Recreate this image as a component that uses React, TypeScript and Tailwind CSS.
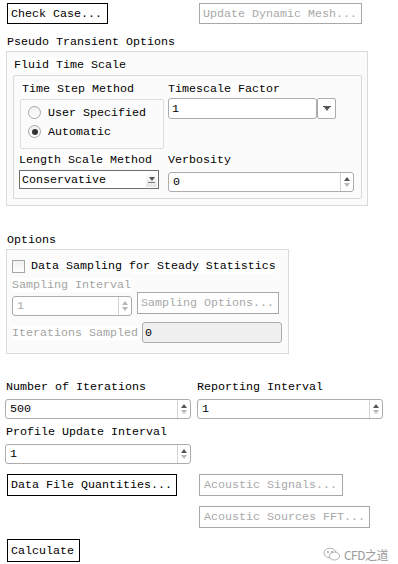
import React from 'react';

const Label: React.FC<{ text: string; gray?: boolean; className?: string }> = ({ text, gray, className = '' }) => (
  <div className={`h-[14px] leading-[14px] whitespace-pre ${gray ? 'text-[#a3a3a3]' : 'text-black'} ${className}`}>
    <span className="bg-white">{text}</span>
  </div>
);

const Button: React.FC<{ text: string; w: string; disabled?: boolean; className?: string }> = ({ text, w, disabled, className = '' }) => (
  <div
    className={`${w} h-[22px] flex items-center pl-[3px] whitespace-pre border bg-white ${
      disabled ? 'border-[#a8a8a8] text-[#a8a8a8]' : 'border-black text-black'
    } ${className}`}
  >
    {text}
  </div>
);

const UpTri = ({ color }: { color: string }) => (
  <div className="w-0 h-0 border-x-[3px] border-x-transparent border-b-[4px]" style={{ borderBottomColor: color }} />
);
const DownTri = ({ color }: { color: string }) => (
  <div className="w-0 h-0 border-x-[3px] border-x-transparent border-t-[4px]" style={{ borderTopColor: color }} />
);

const SpinInput: React.FC<{ value: string; w: string; h?: string; disabled?: boolean }> = ({ value, w, h = 'h-[20px]', disabled }) => (
  <div className={`${w} ${h} flex rounded-[3px] border border-[#acacac] bg-white`}>
    <div className={`flex-1 flex items-center pl-[4px] ${disabled ? 'text-[#a8a8a8]' : 'text-black'}`}>{value}</div>
    <div className="w-[13px] border-l border-[#d4d4d4] flex flex-col items-center justify-center gap-[2px]">
      <UpTri color={disabled ? '#b8b8b8' : '#555'} />
      <DownTri color="#b8b8b8" />
    </div>
  </div>
);

const Radio: React.FC<{ checked?: boolean; text: string }> = ({ checked, text }) => (
  <div className="h-[19px] flex items-center gap-[7px]">
    <div className="w-[13px] h-[13px] rounded-full border border-[#a6a6a6] bg-gradient-to-b from-[#f0f0f0] to-white flex items-center justify-center">
      {checked && <div className="w-[6px] h-[6px] rounded-full bg-[#333]" />}
    </div>
    <span>{text}</span>
  </div>
);

export default function App() {
  return (
    <div className="w-[398px] h-[564px] bg-white overflow-hidden text-black font-['Liberation_Mono',monospace] text-[11.67px] leading-[14px]">
      {/* top buttons */}
      <div className="flex pt-[3px] pl-[7px]">
        <Button text="Check Case..." w="w-[101px]" className="!h-[21px]" />
        <Button text="Update Dynamic Mesh..." w="w-[163px]" disabled className="ml-[91px] !h-[21px]" />
      </div>

      <Label text="Pseudo Transient Options" className="mt-[11px] pl-[7px]" />
      <div className="mt-[2px] ml-[6px] w-[362px] h-[155px] border border-[#dadada] bg-[#fbfbfb] pt-[6px] px-[6px]">
        <Label text="Fluid Time Scale" className="pl-[1px]" />
        <div className="mt-[3px] w-[349px] h-[124px] border border-[#dadada] rounded-[2px] pt-[6px]">
          <div className="flex">
            <div className="w-[154px]">
              <Label text="Time Step Method" className="pl-[8px]" />
              <div className="mt-[3px] ml-[6px] w-[144px] h-[50px] border border-[#dcdcdc] rounded-[2px] pt-[3px] pl-[7px]">
                <Radio text="User Specified" />
                <Radio text="Automatic" checked />
              </div>
            </div>
            <div>
              <Label text="Timescale Factor" />
              <div className="mt-[2px] flex h-[21px]">
                <div className="w-[149px] rounded-[3px] border border-[#acacac] bg-white flex items-center pl-[3px]">1</div>
                <div className="w-[19px] rounded-[2px] border border-[#acacac] bg-white flex flex-col items-center justify-center">
                  <div className="w-[8px] h-[1px] bg-[#555]" />
                  <DownTri color="#555" />
                </div>
              </div>
            </div>
          </div>
          <div className="flex mt-[4px]">
            <div className="w-[154px] pl-[5px]">
              <Label text="Length Scale Method" />
              <div className="mt-[3px] w-[140px] h-[19px] border border-[#6e6e6e] bg-white flex items-center">
                <div className="flex-1 pl-[2px]">Conservative</div>
                <div className="w-[11px] h-[15px] mr-[1px] bg-gradient-to-b from-white to-[#e6e6e6] flex flex-col items-center justify-center gap-[1px]">
                  <DownTri color="#555" />
                  <div className="w-[7px] h-[1px] bg-[#777]" />
                </div>
              </div>
            </div>
            <div>
              <Label text="Verbosity" />
              <div className="mt-[5px]">
                <SpinInput value="0" w="w-[186px]" />
              </div>
            </div>
          </div>
        </div>
      </div>

      <Label text="Options" className="mt-[27px] pl-[7px]" />
      <div className="mt-[2px] ml-[6px] w-[283px] h-[105px] border border-[#dadada] bg-[#fbfbfb] pt-[9px] pl-[5px]">
        <div className="h-[14px] flex items-center gap-[6px]">
          <div className="w-[13px] h-[13px] border border-[#a6a6a6] bg-gradient-to-b from-[#f0f0f0] to-white" />
          <span className="bg-white">Data Sampling for Steady Statistics</span>
        </div>
        <Label text="Sampling Interval" gray className="mt-[5px]" />
        <div className="flex items-start">
          <div className="mt-[4px]">
            <SpinInput value="1" w="w-[120px]" disabled />
          </div>
          <Button text="Sampling Options..." w="w-[142px]" disabled className="ml-[5px]" />
        </div>
        <div className="mt-[6px] flex items-center">
          <span className="text-[#a3a3a3] bg-white">Iterations Sampled</span>
          <div className="ml-[4px] w-[140px] h-[21px] rounded-[3px] border border-[#acacac] bg-[#f0f0f0] flex items-center pl-[2px]">0</div>
        </div>
      </div>

      <div className="mt-[26px] pl-[5px] flex gap-[6px]">
        <div>
          <Label text="Number of Iterations" className="pl-[1px]" />
          <div className="mt-[5px]">
            <SpinInput value="500" w="w-[186px]" />
          </div>
          <Label text="Profile Update Interval" className="pl-[1px] mt-[6px]" />
          <div className="mt-[5px]">
            <SpinInput value="1" w="w-[186px]" />
          </div>
        </div>
        <div>
          <Label text="Reporting Interval" />
          <div className="mt-[5px]">
            <SpinInput value="1" w="w-[186px]" />
          </div>
        </div>
      </div>

      <div className="mt-[10px] flex pl-[7px]">
        <Button text="Data File Quantities..." w="w-[170px]" />
        <Button text="Acoustic Signals..." w="w-[144px]" disabled className="ml-[22px] pl-[4px]" />
      </div>
      <Button text="Acoustic Sources FFT..." w="w-[171px]" disabled className="mt-[10px] ml-[199px] pl-[4px]" />

      <div className="mt-[11px] flex items-center justify-between pr-[10px]">
        <Button text="Calculate" w="w-[73px]" className="ml-[7px] !h-[23px]" />
        <div className="flex items-center gap-[3px] text-[#9a9a9a] mt-[8px]">
          <svg width="18" height="15" viewBox="0 0 18 15" fill="none" stroke="#b0b0b0" strokeWidth="1">
            <ellipse cx="7" cy="6" rx="6" ry="4.8" />
            <ellipse cx="11.5" cy="9" rx="5" ry="4" fill="white" />
            <circle cx="5" cy="5" r="0.7" fill="#b0b0b0" />
            <circle cx="9" cy="5" r="0.7" fill="#b0b0b0" />
          </svg>
          <span className="font-['Noto_Sans_CJK_SC',sans-serif] text-[12px] tracking-[-0.5px]">CFD之道</span>
        </div>
      </div>
    </div>
  );
}
